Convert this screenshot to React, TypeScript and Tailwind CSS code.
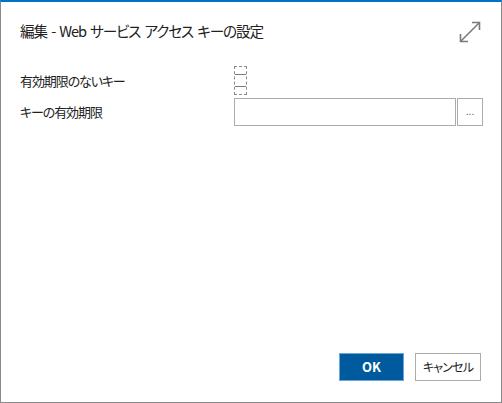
import React from "react";

const jp = "font-['Segoe_UI','Noto_Sans_CJK_JP',sans-serif] [font-feature-settings:'palt']";

const ExpandIcon = () => (
  <svg width="24" height="24" viewBox="0 0 24 24" fill="none" stroke="#7a7a7a" strokeWidth="1.6">
    <line x1="2.5" y1="21.5" x2="21.5" y2="2.5" />
    <polyline points="14,2.5 21.5,2.5 21.5,10" />
    <polyline points="2.5,14 2.5,21.5 10,21.5" />
  </svg>
);

const App = () => {
  return (
    <div className={`w-[502px] h-[403px] bg-white border-t-2 border-t-[#0072c6] border-x border-b border-x-[#8a8a8a] border-b-[#8a8a8a] flex flex-col ${jp}`}>
      <div className="h-[58px] flex items-center justify-between pl-[19px] pr-[19px]">
        <h1 className="text-[14.6px] text-[#212121] tracking-[-1.1px] [word-spacing:2px]">
          編集 - Web サービス アクセス キーの設定
        </h1>
        <div className="pt-[1px]">
          <ExpandIcon />
        </div>
      </div>

      <div className="flex flex-col gap-[4px] mt-[6px] pl-[19px] pr-[17px]">
        <div className="flex items-center h-[28px]">
          <label className="w-[214px] text-[13px] text-[#212121] tracking-[-1.1px] pt-[2px]">有効期限のないキー</label>
          <div className="w-[13px] h-[29px] border border-dashed border-[#8c8c8c] flex flex-col justify-between py-[7px]">
            <div className="h-px bg-[#7a7a7a]" />
            <div className="h-px bg-[#7a7a7a]" />
          </div>
        </div>
        <div className="flex items-center h-[28px]">
          <label className="w-[214px] text-[13px] text-[#212121] tracking-[-1.1px]">キーの有効期限</label>
          <div className="flex gap-[1px]">
            <input className="w-[222px] h-[28px] border border-[#ababab] bg-white outline-none" />
            <button className="w-[26px] h-[28px] border border-[#ababab] bg-white text-[10px] text-[#666] leading-none pb-[2px]">
              ...
            </button>
          </div>
        </div>
      </div>

      <div className="flex-1" />

      <div className="flex justify-end gap-[11px] pr-[20px] pb-[21px]">
        <button className="w-[65px] h-[28px] bg-[#005a9e] border border-[#6aa6dc] text-white text-[13px] font-bold">
          OK
        </button>
        <button className="w-[66px] h-[28px] bg-white border border-[#ababab] text-[#212121] text-[12px] tracking-[-0.8px]">
          キャンセル
        </button>
      </div>
    </div>
  );
};

export default App;
